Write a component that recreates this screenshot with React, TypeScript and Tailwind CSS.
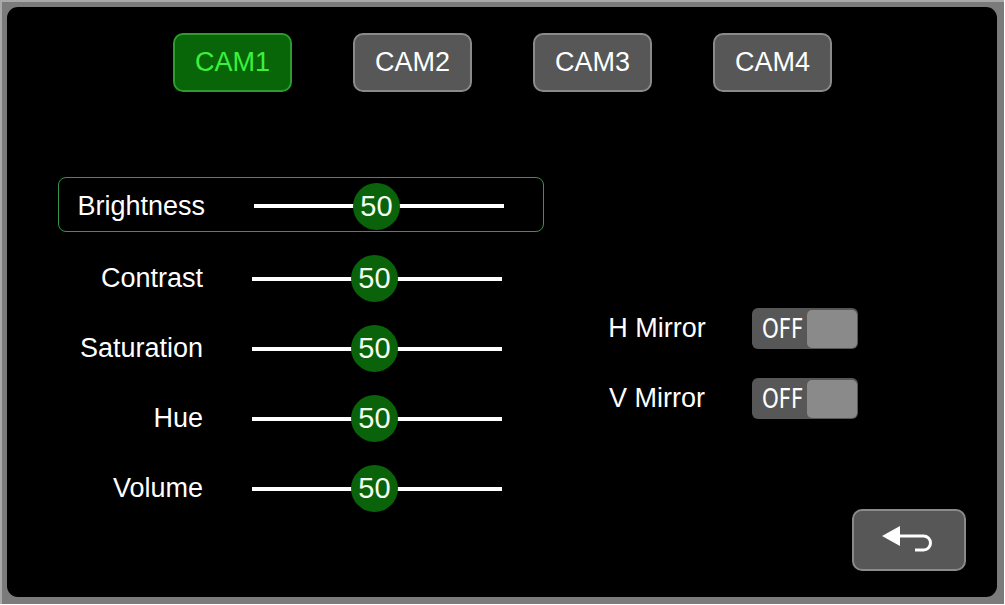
import React from "react";

const font = "font-['Liberation_Sans',Arial,sans-serif]";

function CamButton({ label, active }: { label: string; active?: boolean }) {
  return (
    <div
      className={
        active
          ? "flex h-[59px] w-[119px] items-center justify-center rounded-[10px] border-2 border-[#2f9a2f] bg-[#086608] text-[27px] text-[#3cf03c]"
          : "flex h-[59px] w-[119px] items-center justify-center rounded-[10px] border-2 border-[#8a8a8a] bg-[#575757] text-[27px] text-white"
      }
    >
      {label}
    </div>
  );
}

function SliderRow({ label, value, selected }: { label: string; value: number; selected?: boolean }) {
  const trackW = 250;
  const knob = 47;
  const left = Math.round(((trackW - knob) * value) / 100) - 3;
  return (
    <div
      className={
        selected
          ? "flex h-[55px] w-[486px] items-center rounded-[8px] border-[1.5px] border-[#37964a] pl-[2px] pt-[3px]"
          : "flex h-[55px] w-[486px] items-center rounded-[8px] border border-transparent"
      }
    >
      <div className="w-[144px] text-right text-[27px] leading-none text-white">{label}</div>
      <div className="relative ml-[49px] flex h-[47px] w-[250px] items-center">
        <div className="h-[4px] w-full bg-white" />
        <div
          className="absolute top-0 flex h-[47px] w-[47px] items-center justify-center rounded-full bg-[#0a620a] text-[29px] leading-none text-[#f2fff2]"
          style={{ left }}
        >
          {value}
        </div>
      </div>
    </div>
  );
}

function MirrorRow({ label }: { label: string }) {
  return (
    <div className="flex h-[41px] items-center">
      <div className="w-[110px] text-center text-[27px] leading-none text-white">{label}</div>
      <div className="ml-[40px] flex h-[41px] w-[106px] items-center rounded-[6px] bg-[#575757] pl-[10px] pr-[1px]">
        <span className="inline-block w-[41px] origin-left scale-x-[0.82] whitespace-nowrap font-['DejaVu_Sans',sans-serif] text-[26px] font-medium leading-none text-white">
          OFF
        </span>
        <div className="ml-auto h-[38px] w-[50px] rounded-[5px] bg-[#8a8a8a]" />
      </div>
    </div>
  );
}

export default function App() {
  return (
    <div className={`h-[605px] w-[1005px] bg-white ${font}`}>
      <div className="h-[604px] w-[1004px] border-l-2 border-t-2 border-[#a9a9a9] bg-[#7b7b7b] pb-[7px] pl-[5px] pr-[7px] pt-[5px]">
        <div className="flex h-[590px] w-[990px] flex-col rounded-[11px] bg-black">
          <div className="flex gap-[61px] pl-[166px] pt-[26px]">
            <CamButton label="CAM1" active />
            <CamButton label="CAM2" />
            <CamButton label="CAM3" />
            <CamButton label="CAM4" />
          </div>
          <div className="flex flex-1 pb-[26px] pl-[51px] pr-[31px] pt-[85px]">
            <div className="flex flex-col gap-[15px]">
              <div className="mb-[4px]">
                <SliderRow label="Brightness" value={50} selected />
              </div>
              <SliderRow label="Contrast" value={50} />
              <SliderRow label="Saturation" value={50} />
              <SliderRow label="Hue" value={50} />
              <SliderRow label="Volume" value={50} />
            </div>
            <div className="ml-[58px] flex flex-1 flex-col pt-[131px]">
              <div className="flex flex-col gap-[29px]">
                <MirrorRow label="H Mirror" />
                <MirrorRow label="V Mirror" />
              </div>
              <div className="mt-auto flex h-[62px] w-[114px] self-end rounded-[10px] border-2 border-[#8a8a8a] bg-[#575757]">
                <svg width="110" height="58" viewBox="2 2 110 58">
                  <polygon points="30,27 48,17 48,37" fill="white" />
                  <path d="M47 27 H71.5 A7 7 0 0 1 71.5 41 H63" fill="none" stroke="white" strokeWidth="3" />
                </svg>
              </div>
            </div>
          </div>
        </div>
      </div>
    </div>
  );
}
